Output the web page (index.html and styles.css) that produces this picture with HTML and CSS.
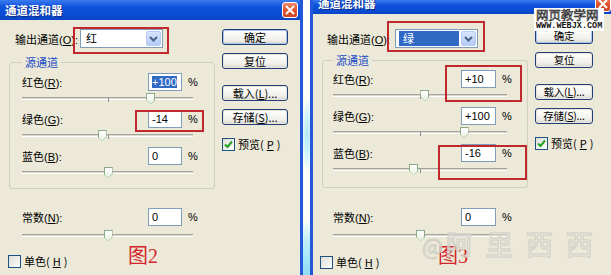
FILE: index.html
```html
<!DOCTYPE html>
<html lang="zh-CN">
<head>
    <meta charset="UTF-8">
    <title>通道混和器</title>
    <link rel="stylesheet" href="styles.css">
</head>
<body>
<div class="page">
    <!-- left dialog: output red -->
    <div class="dialog dialog-left">
        <div class="titlebar">
            <span class="title">通道混和器</span>
            <span class="close"><svg width="10" height="10" viewBox="0 0 10 10"><path d="M1 1 L9 9 M9 1 L1 9" stroke="#fff" stroke-width="2"/></svg></span>
        </div>
        <div class="body">
            <div class="main">
                <div class="out-row">
                    <span class="out-label">输出通道(<u>O</u>):</span>
                    <div class="combo">
                        <span class="combo-text">红</span>
                        <span class="combo-btn"><svg width="9" height="6" viewBox="0 0 9 6"><path d="M1 1 L4.5 4.5 L8 1" stroke="#4D6185" stroke-width="2" fill="none"/></svg></span>
                    </div>
                </div>
                <div class="group">
                    <span class="legend">源通道</span>
                    <div class="chan">
                        <div class="line"><span>红色(<u>R</u>):</span><span class="field"><span class="sel">+100</span></span><span class="pct">%</span></div>
                        <div class="slider"><span class="track"></span><span class="tick"></span><span class="thumb" style="--v:100"></span></div>
                    </div>
                    <div class="chan">
                        <div class="line"><span>绿色(<u>G</u>):</span><span class="field">-14</span><span class="pct">%</span></div>
                        <div class="slider"><span class="track"></span><span class="tick"></span><span class="thumb" style="--v:-14"></span></div>
                    </div>
                    <div class="chan">
                        <div class="line"><span>蓝色(<u>B</u>):</span><span class="field">0</span><span class="pct">%</span></div>
                        <div class="slider"><span class="track"></span><span class="tick"></span><span class="thumb" style="--v:0"></span></div>
                    </div>
                </div>
                <div class="chan const">
                    <div class="line"><span>常数(<u>N</u>):</span><span class="field">0</span><span class="pct">%</span></div>
                    <div class="slider"><span class="track"></span><span class="tick"></span><span class="thumb" style="--v:0"></span></div>
                </div>
                <div class="check mono"><span class="box"></span>单色(<u>H</u>)</div>
            </div>
            <div class="side">
                <div class="btn default">确定</div>
                <div class="btn">复位</div>
                <div class="btn gap-top">载入(<u>L</u>)...</div>
                <div class="btn">存储(<u>S</u>)...</div>
                <div class="check preview"><span class="box checked"><svg width="11" height="11" viewBox="0 0 11 11"><path d="M2 5.5 L4.5 8 L9 2.5" stroke="#21A121" stroke-width="2" fill="none"/></svg></span>预览(<u>P</u>)</div>
            </div>
        </div>
        <!-- annotations -->
        <span class="mark mark-combo"></span>
        <span class="mark mark-green"></span>
        <span class="fig">图2</span>
    </div>

    <div class="gap"></div>

    <!-- right dialog: output green -->
    <div class="dialog dialog-right">
        <div class="titlebar">
            <span class="title">通道混和器</span>
            <span class="close"><svg width="10" height="10" viewBox="0 0 10 10"><path d="M1 1 L9 9 M9 1 L1 9" stroke="#fff" stroke-width="2"/></svg></span>
        </div>
        <div class="body">
            <div class="main">
                <div class="out-row">
                    <span class="out-label">输出通道(<u>O</u>):</span>
                    <div class="combo">
                        <span class="combo-text picked">绿</span>
                        <span class="combo-btn"><svg width="9" height="6" viewBox="0 0 9 6"><path d="M1 1 L4.5 4.5 L8 1" stroke="#4D6185" stroke-width="2" fill="none"/></svg></span>
                    </div>
                </div>
                <div class="group">
                    <span class="legend">源通道</span>
                    <div class="chan">
                        <div class="line"><span>红色(<u>R</u>):</span><span class="field">+10</span><span class="pct">%</span></div>
                        <div class="slider"><span class="track"></span><span class="tick"></span><span class="thumb" style="--v:10"></span></div>
                    </div>
                    <div class="chan">
                        <div class="line"><span>绿色(<u>G</u>):</span><span class="field">+100</span><span class="pct">%</span></div>
                        <div class="slider"><span class="track"></span><span class="tick"></span><span class="thumb" style="--v:100"></span></div>
                    </div>
                    <div class="chan">
                        <div class="line"><span>蓝色(<u>B</u>):</span><span class="field">-16</span><span class="pct">%</span></div>
                        <div class="slider"><span class="track"></span><span class="tick"></span><span class="thumb" style="--v:-16"></span></div>
                    </div>
                </div>
                <div class="chan const">
                    <div class="line"><span>常数(<u>N</u>):</span><span class="field">0</span><span class="pct">%</span></div>
                    <div class="slider"><span class="track"></span><span class="tick"></span><span class="thumb" style="--v:0"></span></div>
                </div>
                <div class="check mono"><span class="box"></span>单色(<u>H</u>)</div>
            </div>
            <div class="side">
                <div class="btn default">确定</div>
                <div class="btn">复位</div>
                <div class="btn gap-top">载入(<u>L</u>)...</div>
                <div class="btn">存储(<u>S</u>)...</div>
                <div class="check preview"><span class="box checked"><svg width="11" height="11" viewBox="0 0 11 11"><path d="M2 5.5 L4.5 8 L9 2.5" stroke="#21A121" stroke-width="2" fill="none"/></svg></span>预览(<u>P</u>)</div>
            </div>
        </div>
        <span class="mark mark-combo"></span>
        <span class="mark mark-red"></span>
        <span class="mark mark-blue"></span>
        <span class="fig">图3</span>
        <!-- watermarks on the screenshot -->
        <div class="stamp">
            <span class="stamp-name">网页教学网</span>
            <span class="stamp-url">WWW.WEBJX.COM</span>
        </div>
        <span class="brand"><span class="at">@</span>阿里西西</span>
    </div>
</div>
</body>
</html>
```

FILE: styles.css
```css
/* two XP style channel mixer dialogs side by side */
body {
    margin: 0;
    background: #fff;
}
.page {
    display: flex;
    width: 611px;
    height: 275px;
    overflow: hidden;
}
.dialog {
    position: relative;
    display: flex;
    flex-direction: column;
    background: #ECE9D8;
    font-family: "Liberation Sans", "Noto Sans CJK SC", sans-serif;
    font-size: 11px;
    color: #000;
    --title-h: 20px;
    --lab: 126px;
    --inp: 34px;
    --slider: 171px;
    --gpad: 12px;
    --btn-w: 66px;
}
.dialog-left {
    width: 300px;
    border-right: 3px solid #2358D8;
}
.dialog-right {
    width: 298px;
    border-left: 3px solid #2358D8;
    --title-h: 14px;
    --lab: 128px;
    --inp: 35px;
    --slider: 174px;
    --gpad: 10px;
    --btn-w: 58px;
}
.gap {
    width: 7px;
    background:
        radial-gradient(ellipse 6px 38px at 60% 135px, #AEE8F8 0, #D8F5FD 60%, transparent 100%),
        linear-gradient(to bottom, #fff 0, #fff 80%, #BDEFFB 88%, #8FDDF4 100%);
}

/* title bar */
.titlebar {
    display: flex;
    justify-content: space-between;
    align-items: center;
    height: var(--title-h);
    padding: 0 2px 0 5px;
    background: linear-gradient(#3B7BF0, #0E52DA 35%, #0B4CD4 75%, #0A44C2);
    color: #fff;
    font-family: "Noto Sans CJK SC", sans-serif;
    font-size: 11.5px;
    font-weight: bold;
    text-shadow: 1px 1px 0 #0A2E8C;
    overflow: hidden;
}
.close {
    display: flex;
    align-items: center;
    justify-content: center;
    width: 14px;
    height: 14px;
    border: 1px solid #fff;
    border-radius: 3px;
    background: linear-gradient(#EE8A68, #E0552F 50%, #CC4422);
}
.dialog-right .titlebar {
    align-items: flex-start;
    padding-right: 0;
}
.dialog-right .title {
    margin-top: -5px;
}
.dialog-right .close {
    margin-top: -4px;
}

.body {
    display: flex;
    flex: 1;
}
.main {
    width: 222px;
}

/* output channel */
.out-row {
    display: flex;
    align-items: center;
    height: 19px;
    margin: 9px 0 0 15px;
}
.dialog-right .out-row {
    margin: 15px 0 0 14px;
}
.out-label {
    width: 65px;
}
.dialog-right .out-label {
    width: 68px;
}
.combo {
    display: flex;
    align-items: center;
    justify-content: space-between;
    box-sizing: border-box;
    width: 83px;
    height: 19px;
    padding: 1px;
    border: 1px solid #7F9DB9;
    background: #fff;
    font-family: "Noto Sans CJK SC", sans-serif;
}
.combo-text {
    padding-left: 4px;
    line-height: 15px;
}
.combo-text.picked {
    flex: 1;
    margin: 0 2px;
    background: #316AC5;
    color: #fff;
}
.combo-btn {
    display: flex;
    align-items: center;
    justify-content: center;
    width: 15px;
    height: 15px;
    border-radius: 2px;
    background: linear-gradient(#D6E3FC, #B4CBF8);
    border: 1px solid #B9CCF3;
    box-sizing: border-box;
}

/* source channels */
.group {
    position: relative;
    width: 192px;
    margin: 14px 0 0 9px;
    padding: 10px 0 4px var(--gpad);
    border: 1px solid #D0D0BF;
    border-radius: 3px;
}
.dialog-right .group {
    width: 194px;
    margin-top: 12px;
    padding: 9px 0 6px var(--gpad);
}
.legend {
    position: absolute;
    top: -8px;
    left: var(--gpad);
    padding: 0 3px;
    background: #ECE9D8;
    color: #1A4BC8;
    font-family: "Noto Sans CJK SC", sans-serif;
    line-height: 14px;
}
.chan {
    margin-bottom: 5px;
}
.line {
    display: grid;
    grid-template-columns: var(--lab) var(--inp) auto;
    align-items: center;
    height: 18px;
}
.field {
    box-sizing: border-box;
    height: 18px;
    padding-left: 3px;
    border: 1px solid #7F9DB9;
    background: #fff;
    line-height: 16px;
}
.sel {
    background: #316AC5;
    color: #fff;
}
.pct {
    padding-left: 6px;
}
.slider {
    position: relative;
    width: var(--slider);
    height: 14px;
}
.track {
    position: absolute;
    left: 0;
    right: 0;
    top: 6px;
    height: 3px;
    box-sizing: border-box;
    border-top: 1px solid #A3A29C;
    border-bottom: 1px solid #fff;
    background: #DCDAD0;
}
.tick {
    position: absolute;
    left: 50%;
    top: 7px;
    width: 1px;
    height: 4px;
    background: #8E8D88;
}
.thumb {
    position: absolute;
    top: 2px;
    left: calc(50% + var(--v) * 0.25%);
    width: 9px;
    height: 11px;
    margin-left: -4px;
    box-sizing: border-box;
    background: linear-gradient(#fff, #E9F0E2);
    border: 1px solid #8AA88A;
    border-bottom: none;
    clip-path: polygon(0 0, 100% 0, 100% 62%, 50% 100%, 0 62%);
}
.thumb::after {
    content: "";
    position: absolute;
    left: -1px;
    right: -1px;
    bottom: 0;
    height: 5px;
    background: linear-gradient(to top, #3E9A3E, #9CCC8E);
    clip-path: polygon(0 0, 50% 100%, 100% 0, 100% 30%, 50% 130%, 0 30%);
}
.const {
    margin: 19px 0 0 22px;
}
.dialog-right .const {
    margin: 20px 0 0 20px;
}
.const .slider {
    margin-top: 2px;
}

/* checkboxes */
.check {
    display: flex;
    align-items: center;
    gap: 3px;
    font-family: "Noto Sans CJK SC", sans-serif;
    line-height: 13px;
    white-space: nowrap;
}
.box {
    display: flex;
    align-items: center;
    justify-content: center;
    flex: none;
    box-sizing: border-box;
    width: 13px;
    height: 13px;
    border: 1px solid #1C5180;
    background: linear-gradient(135deg, #DCDCD7, #fff);
}
.mono {
    margin: 13px 0 0 8px;
}
.dialog-right .mono {
    margin: 14px 0 0 7px;
}

/* buttons */
.side {
    display: flex;
    flex-direction: column;
    width: var(--btn-w);
    padding-top: 9px;
}
.dialog-right .side {
    padding-top: 14px;
}
.btn {
    box-sizing: border-box;
    height: 16px;
    margin-bottom: 8px;
    border: 1px solid #1F3F75;
    border-radius: 3px;
    background: linear-gradient(#FFFFFF, #F1F0EA 70%, #D8D4CA);
    box-shadow: inset 0 0 0 1px #E6E4DC;
    font-family: "Noto Sans CJK SC", sans-serif;
    line-height: 14px;
    text-align: center;
    white-space: nowrap;
}
.dialog-right .btn {
    font-size: 10.5px;
    letter-spacing: -0.2px;
}
.btn.default {
    box-shadow: inset 0 0 0 1px #A9C4F0;
}
.btn.gap-top {
    margin-top: 8px;
}
.btn + .check {
    margin-top: 5px;
}

/* red annotation boxes */
.mark {
    position: absolute;
    box-sizing: border-box;
    border: 2px solid #C0282E;
}
.dialog-left .mark-combo {
    left: 73px;
    top: 27px;
    width: 96px;
    height: 27px;
}
.mark-green {
    left: 135px;
    top: 110px;
    width: 69px;
    height: 22px;
}
.dialog-right .mark-combo {
    left: 74px;
    top: 21px;
    width: 98px;
    height: 31px;
}
.mark-red {
    left: 132px;
    top: 65px;
    width: 77px;
    height: 37px;
}
.mark-blue {
    left: 125px;
    top: 145px;
    width: 89px;
    height: 35px;
}
.fig {
    position: absolute;
    top: 245px;
    left: 128px;
    color: #D4242A;
    font-family: "Liberation Serif", "Noto Sans CJK SC", serif;
    font-size: 20px;
    line-height: 22px;
}
.dialog-right .fig {
    left: 125px;
}

/* watermarks */
.stamp {
    position: absolute;
    top: 8px;
    left: 221px;
    display: flex;
    flex-direction: column;
    align-items: flex-start;
    padding: 0 2px;
    background: #fff;
}
.stamp-name {
    font-family: "Noto Sans CJK SC", sans-serif;
    font-size: 12.5px;
    line-height: 14px;
    color: #fff;
    -webkit-text-stroke: 0.6px #111;
}
.stamp-url {
    font-family: "Liberation Mono", monospace;
    font-size: 8.5px;
    font-weight: bold;
    line-height: 9px;
    color: #111;
}
.brand {
    position: absolute;
    top: 227px;
    left: 109px;
    font-family: "Noto Sans CJK SC", sans-serif;
    font-size: 27px;
    line-height: 34px;
    letter-spacing: 13px;
    color: rgba(255, 255, 255, 0.35);
    -webkit-text-stroke: 1px #CFCDC5;
    white-space: nowrap;
}
.at {
    margin-right: 3px;
    font-size: 22px;
    letter-spacing: 0;
}
```
